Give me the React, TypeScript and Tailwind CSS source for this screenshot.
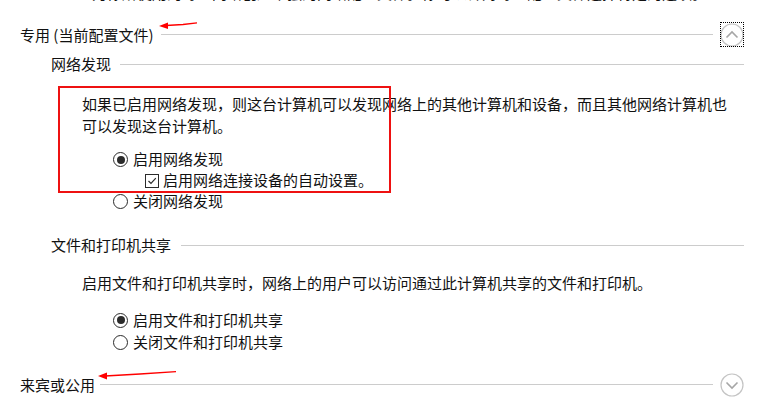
import React from "react";

const font = { fontFamily: '"Noto Sans CJK SC", "Noto Sans", sans-serif' };

function Chevron({ up, focused }: { up?: boolean; focused?: boolean }) {
  return (
    <div
      className={
        "w-[24px] h-[25px] shrink-0 flex items-center justify-center " +
        (focused ? "outline-1 outline-dotted outline-black -outline-offset-1" : "")
      }
    >
      <svg width="24" height="24" viewBox="0 0 24 24">
        <circle cx="12" cy="12" r="11" fill="none" stroke="#c4c4c4" strokeWidth="1.2" />
        {up ? (
          <path d="M6.5 14.5 L12 9 L17.5 14.5" fill="none" stroke="#a6a6a6" strokeWidth="1.6" />
        ) : (
          <path d="M6.5 9.5 L12 15 L17.5 9.5" fill="none" stroke="#a6a6a6" strokeWidth="1.6" />
        )}
      </svg>
    </div>
  );
}

function Radio({ checked, label }: { checked?: boolean; label: string }) {
  return (
    <div className="flex items-center">
      <span className="w-[15px] h-[15px] rounded-full border border-[#2b2b2b] bg-white flex items-center justify-center">
        {checked && <span className="w-[8px] h-[8px] rounded-full bg-[#2b2b2b]" />}
      </span>
      <span className="ml-[5px]">{label}</span>
    </div>
  );
}

function RedArrow({ d, tip }: { d: string; tip: string }) {
  return (
    <svg className="absolute left-0 top-0 pointer-events-none" width="772" height="404">
      <path d={d} fill="none" stroke="#ff0000" strokeWidth="1.3" />
      <polygon points={tip} fill="#ff0000" />
    </svg>
  );
}

export default function App() {
  return (
    <div className="relative w-[772px] h-[404px] bg-white text-[15px] text-[#111] overflow-hidden" style={font}>
      {/* clipped text from the previous line */}
      <div className="h-[3px] overflow-hidden pl-[92px]">
        <div className="-mt-[17px] leading-[20px] whitespace-nowrap">
          为你所使用的每个网络创建单独的网络配置文件。你可以针对每个配置文件选择特定的选项。
        </div>
      </div>

      {/* 专用 */}
      <div className="mt-[19px] h-[25px] flex items-center pl-[20px] pr-[28px]">
        <span className="leading-[20px] whitespace-nowrap">专用 (当前配置文件)</span>
        <div className="flex-1 h-px bg-[#cccccc] ml-[7px] mr-[7px]" />
        <Chevron up focused />
      </div>

      {/* 网络发现 */}
      <div className="mt-[7px] h-[20px] flex items-center pl-[51px] pr-[28px]">
        <span className="leading-[20px] whitespace-nowrap">网络发现</span>
        <div className="flex-1 h-px bg-[#cccccc] ml-[9px]" />
      </div>

      <div className="mt-[19px] pl-[82px] leading-[22px]">
        如果已启用网络发现，则这台计算机可以发现网络上的其他计算机和设备，而且其他网络计算机也
        <br />
        可以发现这台计算机。
      </div>

      <div className="mt-[12px] pl-[113px] flex flex-col">
        <div className="h-[21px] flex items-center">
          <Radio checked label="启用网络发现" />
        </div>
        <div className="h-[21px] flex items-center pl-[32px]">
          <span className="w-[14px] h-[14px] border border-[#2b2b2b] bg-white flex items-center justify-center">
            <svg width="10" height="10" viewBox="0 0 10 10">
              <path d="M1.5 5 L4 7.5 L8.8 2.2" fill="none" stroke="#2b2b2b" strokeWidth="1.2" />
            </svg>
          </span>
          <span className="ml-[4px]">启用网络连接设备的自动设置。</span>
        </div>
        <div className="h-[21px] flex items-center">
          <Radio label="关闭网络发现" />
        </div>
      </div>

      {/* 文件和打印机共享 */}
      <div className="mt-[23px] h-[20px] flex items-center pl-[51px] pr-[28px]">
        <span className="leading-[20px] whitespace-nowrap">文件和打印机共享</span>
        <div className="flex-1 h-px bg-[#cccccc] ml-[10px]" />
      </div>

      <div className="mt-[17px] pl-[82px] leading-[22px]">
        启用文件和打印机共享时，网络上的用户可以访问通过此计算机共享的文件和打印机。
      </div>

      <div className="mt-[15px] pl-[113px] flex flex-col">
        <div className="h-[22px] flex items-center">
          <Radio checked label="启用文件和打印机共享" />
        </div>
        <div className="h-[22px] flex items-center">
          <Radio label="关闭文件和打印机共享" />
        </div>
      </div>

      {/* 来宾或公用 */}
      <div className="mt-[19px] h-[25px] flex items-center pl-[20px] pr-[28px]">
        <span className="leading-[20px] whitespace-nowrap">来宾或公用</span>
        <div className="flex-1 h-px bg-[#cccccc] ml-[5px] mr-[7px]" />
        <Chevron />
      </div>

      {/* annotations */}
      <div className="absolute left-[58px] top-[86px] w-[333px] h-[107px] border-2 border-[#ee1111] pointer-events-none" />
      <RedArrow d="M166 25.5 L183 24.5 L197 22.8" tip="159,26 168,22.5 168,29" />
      <RedArrow d="M105 376 L140 374 L176 371.7" tip="98,376 107,372.5 107,379.5" />
    </div>
  );
}
